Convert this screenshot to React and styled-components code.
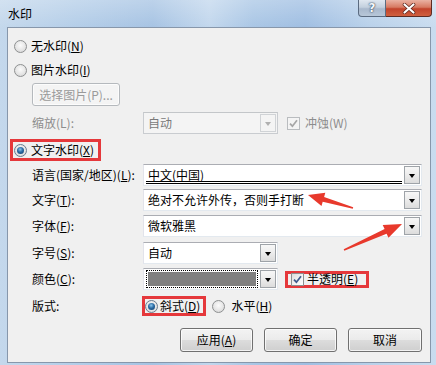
import styled, { createGlobalStyle, css } from "styled-components";

const GlobalStyle = createGlobalStyle`
  html, body { margin: 0; padding: 0; background: #fff; }
  body {
    font-family: "Noto Sans CJK SC", "Noto Sans", sans-serif;
    font-size: 12px;
  }
  * { box-sizing: border-box; }
`;

const Window = styled.div`
  position: relative;
  width: 436px;
  height: 365px;
  display: flex;
  flex-direction: column;
  padding: 0 5px 2px 7px;
  background:
    linear-gradient(180deg, rgba(255,255,255,0.25), rgba(255,255,255,0) 28px),
    linear-gradient(90deg, #c4d8ec 0%, #b3cde8 18%, #a6c3e3 35%, #c2d7ed 48%, #a9c6e5 58%, #9fbee2 70%, #b9d1ea 85%, #c9dcef 100%);
  color: #000;
  overflow: hidden;
`;

const TitleBar = styled.div`
  height: 27px;
  display: flex;
  align-items: flex-start;
  flex: none;
`;

const Title = styled.div`
  margin-left: 1px;
  line-height: 28px;
  font-size: 12px;
`;

const Caption = styled.div`
  margin-left: auto;
  margin-right: -1px;
  display: flex;
`;

const HelpButton = styled.div`
  width: 28px;
  height: 17px;
  border: 1px solid #5b6b80;
  border-top: none;
  border-radius: 0 0 0 4px;
  background: linear-gradient(180deg, #dfe7f0 0%, #c3d0de 45%, #a8b8cc 55%, #b8c7d8 100%);
  display: flex;
  align-items: center;
  justify-content: center;
  font-family: "DejaVu Sans", sans-serif;
  font-weight: bold;
  font-size: 12px;
  color: #f6f8fb;
  text-shadow: 0 0 1px #2d3f57, 0 0 2px #2d3f57;
`;

const CloseButton = styled.div`
  width: 46px;
  height: 17px;
  border: 1px solid #5d2b22;
  border-left: none;
  border-top: none;
  border-radius: 0 0 4px 0;
  background: linear-gradient(180deg, #eab2a3 0%, #d77a62 45%, #c2432b 55%, #d0603f 100%);
  display: flex;
  align-items: center;
  justify-content: center;
`;

const Client = styled.div`
  flex: 1;
  border: 1px solid #8797ab;
  background: #f0f0f0;
  display: flex;
  flex-direction: column;
  padding: 6px 8px 0 0;
`;

const Row = styled.div`
  display: flex;
  align-items: center;
  height: ${(p) => p.$h || 22}px;
  margin-top: ${(p) => p.$mt || 0}px;
  padding-left: ${(p) => p.$indent || 0}px;
  line-height: 16px;
  white-space: nowrap;
`;

const Radio = styled.span`
  position: relative;
  flex: none;
  width: 13px;
  height: 13px;
  border-radius: 50%;
  border: 1px solid #8e9091;
  background: radial-gradient(circle at 50% 40%, #fbfbfb 0%, #e6e6e6 55%, #cfcfcf 100%);
  margin-right: ${(p) => p.$gap ?? 4}px;
  ${(p) =>
    p.$checked &&
    css`
      border-color: #6a7c8f;
      &::after {
        content: "";
        position: absolute;
        left: 2px;
        top: 2px;
        width: 7px;
        height: 7px;
        border-radius: 50%;
        background: radial-gradient(circle at 45% 35%, #8cc8ef 0%, #2a6aa3 45%, #123c66 100%);
      }
    `}
`;

const Text = styled.span`
  color: ${(p) => (p.$disabled ? "#8d8d8d" : "#000")};
`;

const Key = styled.span`
  text-decoration: underline;
  text-underline-offset: 1px;
`;

const Highlight = styled.div`
  display: flex;
  align-items: center;
  height: ${(p) => p.$h}px;
  border: 3px solid #e5383b;
  margin-left: ${(p) => p.$ml || 0}px;
  padding: 0 ${(p) => p.$pr || 0}px 0 ${(p) => p.$pl || 0}px;
`;

const PushButton = styled.button`
  width: ${(p) => p.$w}px;
  height: ${(p) => p.$h || 24}px;
  padding: 0;
  font: inherit;
  font-size: 12px;
  line-height: 16px;
  border-radius: 3px;
  border: 1px solid ${(p) => (p.disabled ? "#b5b9bd" : "#707070")};
  color: ${(p) => (p.disabled ? "#9a9a9a" : "#000")};
  background: ${(p) =>
    p.disabled
      ? "#f4f4f4"
      : "linear-gradient(180deg, #f3f3f3 0%, #ebebeb 48%, #dcdcdc 52%, #cfcfcf 100%)"};
  box-shadow: inset 0 0 0 1px rgba(255, 255, 255, 0.75);
  flex: none;
`;

const FieldLabel = styled.span`
  width: ${(p) => p.$w || 111}px;
  flex: none;
  color: ${(p) => (p.$disabled ? "#8d8d8d" : "#000")};
`;

const Combo = styled.div`
  position: relative;
  width: ${(p) => p.$w}px;
  height: 22px;
  flex: none;
  border: 1px solid ${(p) => (p.$disabled ? "#c3c6c9" : "#abadb3")};
  border-left-color: ${(p) => (p.$disabled ? "#c9ccd0" : "#e2e3ea")};
  border-right-color: ${(p) => (p.$disabled ? "#c9ccd0" : "#e3e9ef")};
  border-bottom-color: ${(p) => (p.$disabled ? "#c9ccd0" : "#e3e9ef")};
  background: ${(p) => (p.$disabled ? "#f4f4f4" : "#fff")};
  display: flex;
  align-items: center;
  padding: 1px 19px 1px 2px;
`;

const ComboText = styled.div`
  flex: 1;
  height: 100%;
  display: flex;
  align-items: center;
  padding-left: 2px;
  color: ${(p) => (p.$disabled ? "#7a7a7a" : "#000")};
  ${(p) =>
    p.$underline &&
    css`
      border-bottom: 3px double #000;
      padding-top: 2px;
    `}
`;

const Swatch = styled.div`
  flex: 1;
  height: 100%;
  border: 1px dotted #000;
  padding: 1px;
  &::before {
    content: "";
    display: block;
    height: 100%;
    background: ${(p) => p.$color};
  }
`;

const DropButton = styled.div`
  position: absolute;
  right: 1px;
  top: 1px;
  bottom: 1px;
  width: 16px;
  border: 1px solid ${(p) => (p.$disabled ? "#d0d3d6" : "#9ea3a8")};
  background: ${(p) =>
    p.$disabled ? "#f4f4f4" : "linear-gradient(180deg, #f7f7f7 0%, #ececec 50%, #dcdcdc 100%)"};
  display: flex;
  align-items: center;
  justify-content: center;
  &::after {
    content: "";
    width: 0;
    height: 0;
    border-left: 3.5px solid transparent;
    border-right: 3.5px solid transparent;
    border-top: 4px solid ${(p) => (p.$disabled ? "#b0b0b0" : "#000")};
    margin-top: 1px;
  }
`;

const CheckBox = styled.span`
  flex: none;
  width: 13px;
  height: 13px;
  border: 1px solid ${(p) => (p.$disabled ? "#b9bcbf" : "#8e8f8f")};
  background: ${(p) =>
    p.$disabled ? "#f4f4f4" : "linear-gradient(135deg, #dcdcdc 0%, #f4f4f4 60%, #ffffff 100%)"};
  margin-left: ${(p) => p.$ml || 0}px;
  margin-right: ${(p) => p.$gap ?? 4}px;
  display: flex;
  align-items: center;
  justify-content: center;
`;

const ButtonBar = styled.div`
  display: flex;
  justify-content: flex-end;
  gap: 11px;
  margin-top: 11px;
`;

const Overlay = styled.svg`
  position: absolute;
  left: 0;
  top: 0;
  pointer-events: none;
`;

function Check({ color }) {
  return (
    <svg width="9" height="9" viewBox="0 0 9 9">
      <path d="M1 4.6 L3.4 7.2 L8 1.2" fill="none" stroke={color} strokeWidth="1.7" />
    </svg>
  );
}

function CloseGlyph() {
  return (
    <svg width="14" height="11" viewBox="0 0 14 11">
      <path d="M2.5 1.5 L11.5 9.5 M11.5 1.5 L2.5 9.5" stroke="#5a241b" strokeWidth="3.6" strokeLinecap="round" />
      <path d="M2.5 1.5 L11.5 9.5 M11.5 1.5 L2.5 9.5" stroke="#ffffff" strokeWidth="2.2" strokeLinecap="round" />
    </svg>
  );
}

function DropDown({ width, disabled, underline, children }) {
  return (
    <Combo $w={width} $disabled={disabled}>
      <ComboText $disabled={disabled} $underline={underline}>
        {children}
      </ComboText>
      <DropButton $disabled={disabled} />
    </Combo>
  );
}

export default function App() {
  return (
    <>
      <GlobalStyle />
      <Window>
        <TitleBar>
          <Title>水印</Title>
          <Caption>
            <HelpButton>?</HelpButton>
            <CloseButton>
              <CloseGlyph />
            </CloseButton>
          </Caption>
        </TitleBar>

        <Client>
          <Row $h={24} $indent={6}>
            <Radio />
            <Text>
              无水印(<Key>N</Key>)
            </Text>
          </Row>
          <Row $h={24} $indent={6}>
            <Radio />
            <Text>
              图片水印(<Key>I</Key>)
            </Text>
          </Row>
          <Row $h={23} $mt={1} $indent={24}>
            <PushButton $w={88} $h={23} disabled>
              选择图片(P)...
            </PushButton>
          </Row>
          <Row $mt={6} $indent={24}>
            <FieldLabel $disabled>缩放(L):</FieldLabel>
            <DropDown width={135} disabled>
              自动
            </DropDown>
            <CheckBox $ml={9} $gap={5} $disabled>
              <Check color="#a6a6a6" />
            </CheckBox>
            <Text $disabled>冲蚀(W)</Text>
          </Row>
          <Row $mt={5} $indent={2}>
            <Highlight $h={22} $pl={1} $pr={4}>
              <Radio $checked />
              <Text>
                文字水印(<Key>X</Key>)
              </Text>
            </Highlight>
          </Row>
          <Row $mt={3} $indent={24}>
            <FieldLabel>
              语言(国家/地区)(<Key>L</Key>):
            </FieldLabel>
            <DropDown width={279} underline>
              中文(中国)
            </DropDown>
          </Row>
          <Row $mt={3} $indent={24}>
            <FieldLabel>
              文字(<Key>T</Key>):
            </FieldLabel>
            <DropDown width={279}>绝对不允许外传，否则手打断</DropDown>
          </Row>
          <Row $mt={4} $indent={24}>
            <FieldLabel>
              字体(<Key>F</Key>):
            </FieldLabel>
            <DropDown width={279}>微软雅黑</DropDown>
          </Row>
          <Row $mt={5} $indent={24}>
            <FieldLabel>
              字号(<Key>S</Key>):
            </FieldLabel>
            <DropDown width={135}>自动</DropDown>
          </Row>
          <Row $mt={4} $indent={24}>
            <FieldLabel>
              颜色(<Key>C</Key>):
            </FieldLabel>
            <Combo $w={135}>
              <Swatch $color="#808080" />
              <DropButton />
            </Combo>
            <Highlight $h={17} $ml={7} $pl={3} $pr={8}>
              <CheckBox $gap={3}>
                <Check color="#3e5a8c" />
              </CheckBox>
              <Text>
                半透明(<Key>E</Key>)
              </Text>
            </Highlight>
          </Row>
          <Row $mt={5} $indent={24}>
            <FieldLabel $w={110}>版式:</FieldLabel>
            <Highlight $h={20} $pl={0} $pr={3}>
              <Radio $checked $gap={2} />
              <Text>
                斜式(<Key>D</Key>)
              </Text>
            </Highlight>
            <Row $indent={6}>
              <Radio $gap={6} />
              <Text>
                水平(<Key>H</Key>)
              </Text>
            </Row>
          </Row>
          <ButtonBar>
            <PushButton $w={73}>
              应用(<Key>A</Key>)
            </PushButton>
            <PushButton $w={73}>确定</PushButton>
            <PushButton $w={74}>取消</PushButton>
          </ButtonBar>
        </Client>

        <Overlay width="436" height="365" viewBox="0 0 436 365">
          <polygon
            fill="#e8392c"
            points="308,195 325.3,192.7 324.1,197 353.2,207.2 352.8,208.8 322.7,201.8 321.5,206.1"
          />
          <polygon
            fill="#e8392c"
            points="402,224 382.7,225 384.6,229.1 343.7,249.3 344.3,250.7 386.6,233.7 388.5,237.8"
          />
        </Overlay>
      </Window>
    </>
  );
}
